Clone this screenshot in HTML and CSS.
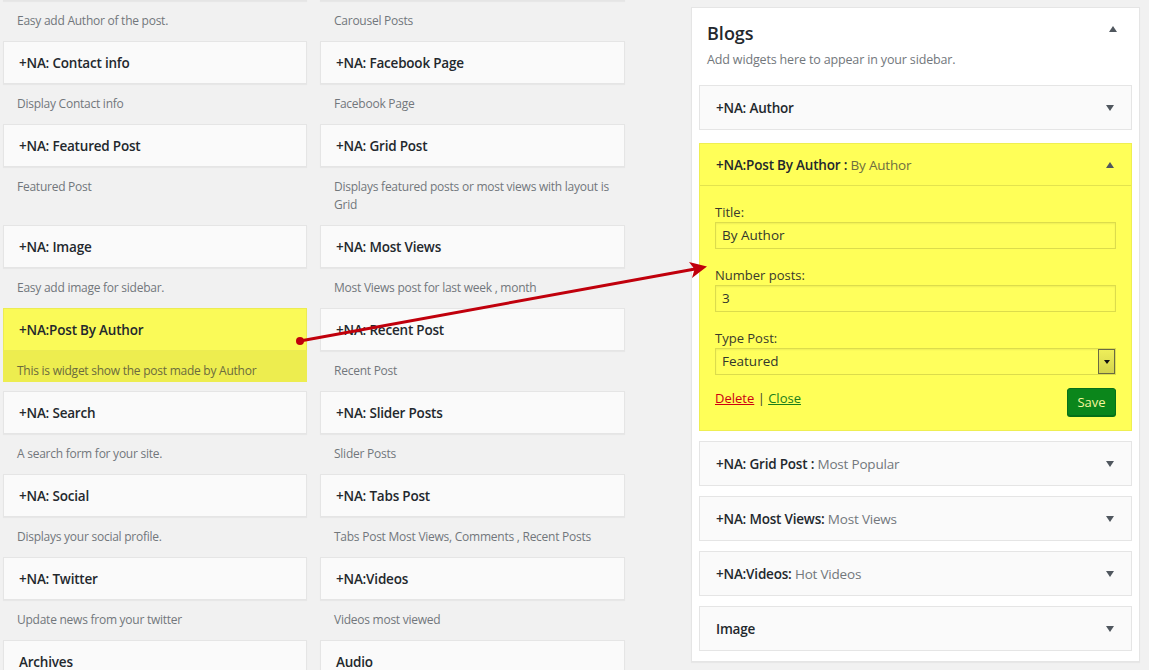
FILE: index.html
```html
<!DOCTYPE html>
<html lang="en">
<head>
<meta charset="utf-8">
<title>Widgets</title>
<link rel="stylesheet" href="styles.css">
</head>
<body>
<div class="screen">
  <div class="available">
    <div class="widget"><div class="widget-top"></div><div class="widget-desc">Easy add Author of the post.</div></div>
    <div class="widget"><div class="widget-top"></div><div class="widget-desc">Carousel Posts</div></div>

    <div class="widget"><div class="widget-top">+NA: Contact info</div><div class="widget-desc">Display Contact info</div></div>
    <div class="widget"><div class="widget-top">+NA: Facebook Page</div><div class="widget-desc">Facebook Page</div></div>

    <div class="widget"><div class="widget-top">+NA: Featured Post</div><div class="widget-desc">Featured Post</div></div>
    <div class="widget"><div class="widget-top">+NA: Grid Post</div><div class="widget-desc">Displays featured posts or most views with layout is Grid</div></div>

    <div class="widget"><div class="widget-top">+NA: Image</div><div class="widget-desc">Easy add image for sidebar.</div></div>
    <div class="widget"><div class="widget-top">+NA: Most Views</div><div class="widget-desc">Most Views post for last week , month</div></div>

    <div class="widget hl"><div class="widget-top">+NA:Post By Author</div><div class="widget-desc">This is widget show the post made by Author</div></div>
    <div class="widget"><div class="widget-top">+NA: Recent Post</div><div class="widget-desc">Recent Post</div></div>

    <div class="widget"><div class="widget-top">+NA: Search</div><div class="widget-desc">A search form for your site.</div></div>
    <div class="widget"><div class="widget-top">+NA: Slider Posts</div><div class="widget-desc">Slider Posts</div></div>

    <div class="widget"><div class="widget-top">+NA: Social</div><div class="widget-desc">Displays your social profile.</div></div>
    <div class="widget"><div class="widget-top">+NA: Tabs Post</div><div class="widget-desc">Tabs Post Most Views, Comments , Recent Posts</div></div>

    <div class="widget"><div class="widget-top">+NA: Twitter</div><div class="widget-desc">Update news from your twitter</div></div>
    <div class="widget"><div class="widget-top">+NA:Videos</div><div class="widget-desc">Videos most viewed</div></div>

    <div class="widget"><div class="widget-top">Archives</div><div class="widget-desc">Archives</div></div>
    <div class="widget"><div class="widget-top">Audio</div><div class="widget-desc">Audio</div></div>
  </div>

  <div class="sidebar">
    <div class="sidebar-head">
      <h2 class="sidebar-title">Blogs</h2>
      <span class="tri tri-up"></span>
    </div>
    <p class="sidebar-desc">Add widgets here to appear in your sidebar.</p>

    <div class="sw"><span class="sw-title">+NA: Author</span><span class="tri tri-down"></span></div>

    <div class="sw-open">
      <div class="sw-head"><span class="sw-title">+NA:Post By Author :<span class="in-title"> By Author</span></span><span class="tri tri-up"></span></div>
      <div class="sw-body">
        <div class="field">
          <label class="field-label">Title:</label>
          <div class="input">By Author</div>
        </div>
        <div class="field">
          <label class="field-label">Number posts:</label>
          <div class="input">3</div>
        </div>
        <div class="field field-last">
          <label class="field-label">Type Post:</label>
          <div class="input select"><span class="select-value">Featured</span><span class="select-btn"><span class="tri-small"></span></span></div>
        </div>
        <div class="actions">
          <div class="links"><a class="link-delete">Delete</a> | <a class="link-close">Close</a></div>
          <span class="btn-save">Save</span>
        </div>
      </div>
    </div>

    <div class="sw"><span class="sw-title">+NA: Grid Post :<span class="in-title"> Most Popular</span></span><span class="tri tri-down"></span></div>
    <div class="sw"><span class="sw-title">+NA: Most Views:<span class="in-title"> Most Views</span></span><span class="tri tri-down"></span></div>
    <div class="sw"><span class="sw-title">+NA:Videos:<span class="in-title"> Hot Videos</span></span><span class="tri tri-down"></span></div>
    <div class="sw sw-last"><span class="sw-title">Image</span><span class="tri tri-down"></span></div>
  </div>
</div>

<svg class="arrow" width="1149" height="670" viewBox="0 0 1149 670" aria-hidden="true">
  <line x1="300" y1="341" x2="695" y2="269" stroke="#c0000c" stroke-width="3" stroke-linecap="round"/>
  <circle cx="300" cy="341" r="4" fill="#c0000c"/>
  <polygon points="707,266.5 689,262 694.5,269.3 692,278" fill="#c0000c"/>
</svg>
</body>
</html>
```
FILE: styles.css
```css
* { box-sizing: border-box; }
html, body { margin: 0; padding: 0; }
body {
  background: #f1f1f1;
  font-family: "Open Sans", "Liberation Sans", sans-serif;
  color: #23282d;
  width: 1149px;
  height: 670px;
  overflow: hidden;
  position: relative;
}
.screen { display: flex; align-items: flex-start; }

/* available widgets */
.available {
  width: 625px;
  flex: none;
  padding-left: 3px;
  margin-top: -42px;
  display: grid;
  grid-template-columns: 304px 305px;
  column-gap: 13px;
  align-items: start;
}
.widget-top {
  height: 43px;
  background: #fafafa;
  border: 1px solid #e5e5e5;
  box-shadow: 0 1px 1px rgba(0,0,0,.04);
  padding: 1px 15px 0;
  display: flex;
  align-items: center;
  font-size: 13.5px;
  font-weight: 600;
  letter-spacing: -0.2px;
  color: #23282d;
}
.widget-desc {
  padding: 11px 14px;
  font-size: 12px;
  line-height: 18px;
  color: #72777c;
  letter-spacing: -0.25px;
}
.widget.hl .widget-top { background: #fafa58; border-color: #ecec52; }
.widget.hl .widget-desc {
  background: linear-gradient(#eded4f 0 31px, transparent 31px);
  color: #6b6b3e;
}

/* sidebar */
.sidebar {
  flex: none;
  margin-left: 66px;
  margin-top: 7px;
  width: 449px;
  background: #fff;
  border: 1px solid #e5e5e5;
  box-shadow: 0 1px 1px rgba(0,0,0,.04);
  padding: 0 7px 10px;
}
.sidebar-head {
  display: flex;
  justify-content: space-between;
  align-items: flex-start;
  padding: 13px 15px 0 8px;
}
.sidebar-title {
  margin: 0;
  font-size: 18px;
  line-height: 24px;
  font-weight: 600;
  color: #23282d;
}
.sidebar-head .tri-up { margin-top: 5px; }
.sidebar-desc {
  margin: 6px 8px 16px;
  font-size: 12.5px;
  line-height: 18px;
  letter-spacing: -0.15px;
  color: #72777c;
}

.tri { display: inline-block; width: 0; height: 0; flex: none; }
.tri-down { border-left: 4.5px solid transparent; border-right: 4.5px solid transparent; border-top: 6px solid #50575e; }
.tri-up { border-left: 4.5px solid transparent; border-right: 4.5px solid transparent; border-bottom: 6px solid #50575e; }

.sw {
  height: 45px;
  background: #fafafa;
  border: 1px solid #e5e5e5;
  display: flex;
  align-items: center;
  justify-content: space-between;
  padding: 0 17px 0 16px;
  margin-bottom: 10px;
}
.sw-last { margin-bottom: 0; }
.sw-title {
  font-size: 13.5px;
  font-weight: 600;
  color: #23282d;
  letter-spacing: -0.2px;
}
.in-title { font-weight: 400; color: #72777c; }

.sw-open {
  margin-top: 13px;
  margin-bottom: 10px;
  background: #ffff58;
  border: 1px solid #efef52;
}
.sw-head {
  height: 42px;
  border-bottom: 1px solid #e3e34e;
  display: flex;
  align-items: center;
  justify-content: space-between;
  padding: 0 17px 0 16px;
}
.sw-open .in-title { color: #6e6e40; }
.sw-body { padding: 17px 15px 14px; }
.field { margin-bottom: 17px; }
.field-last { margin-bottom: 13px; }
.field-label {
  display: block;
  font-size: 13px;
  line-height: 18px;
  margin-bottom: 1px;
  color: #3a3a2c;
}
.input {
  height: 27px;
  border: 1px solid #dcdc4c;
  background: #ffff5c;
  box-shadow: inset 0 1px 2px rgba(0,0,0,.07);
  padding: 0 6px;
  font-size: 13.5px;
  line-height: 25px;
  color: #32372c;
}
.select { display: flex; align-items: stretch; padding-right: 0; }
.select-value { flex: 1; }
.select-btn {
  width: 17px;
  border: 1px solid #6a6a42;
  background: linear-gradient(#eeee5a, #d4d44c);
  display: flex;
  align-items: center;
  justify-content: center;
}
.tri-small {
  width: 0; height: 0;
  border-left: 3.5px solid transparent;
  border-right: 3.5px solid transparent;
  border-top: 4px solid #111;
}
.actions { display: flex; justify-content: space-between; align-items: flex-start; }
.links { font-size: 13px; line-height: 20px; color: #3a3a2c; }
.link-delete { color: #cc0011; text-decoration: underline; }
.link-close { color: #1a7d1a; text-decoration: underline; }
.btn-save {
  height: 28px;
  width: 49px;
  background: #0b861b;
  border: 1px solid #07701a;
  border-radius: 3px;
  color: #f6f69c;
  font-size: 13px;
  line-height: 26px;
  text-align: center;
  box-shadow: 0 1px 0 #067014;
}

.arrow { position: absolute; left: 0; top: 0; pointer-events: none; }
```
